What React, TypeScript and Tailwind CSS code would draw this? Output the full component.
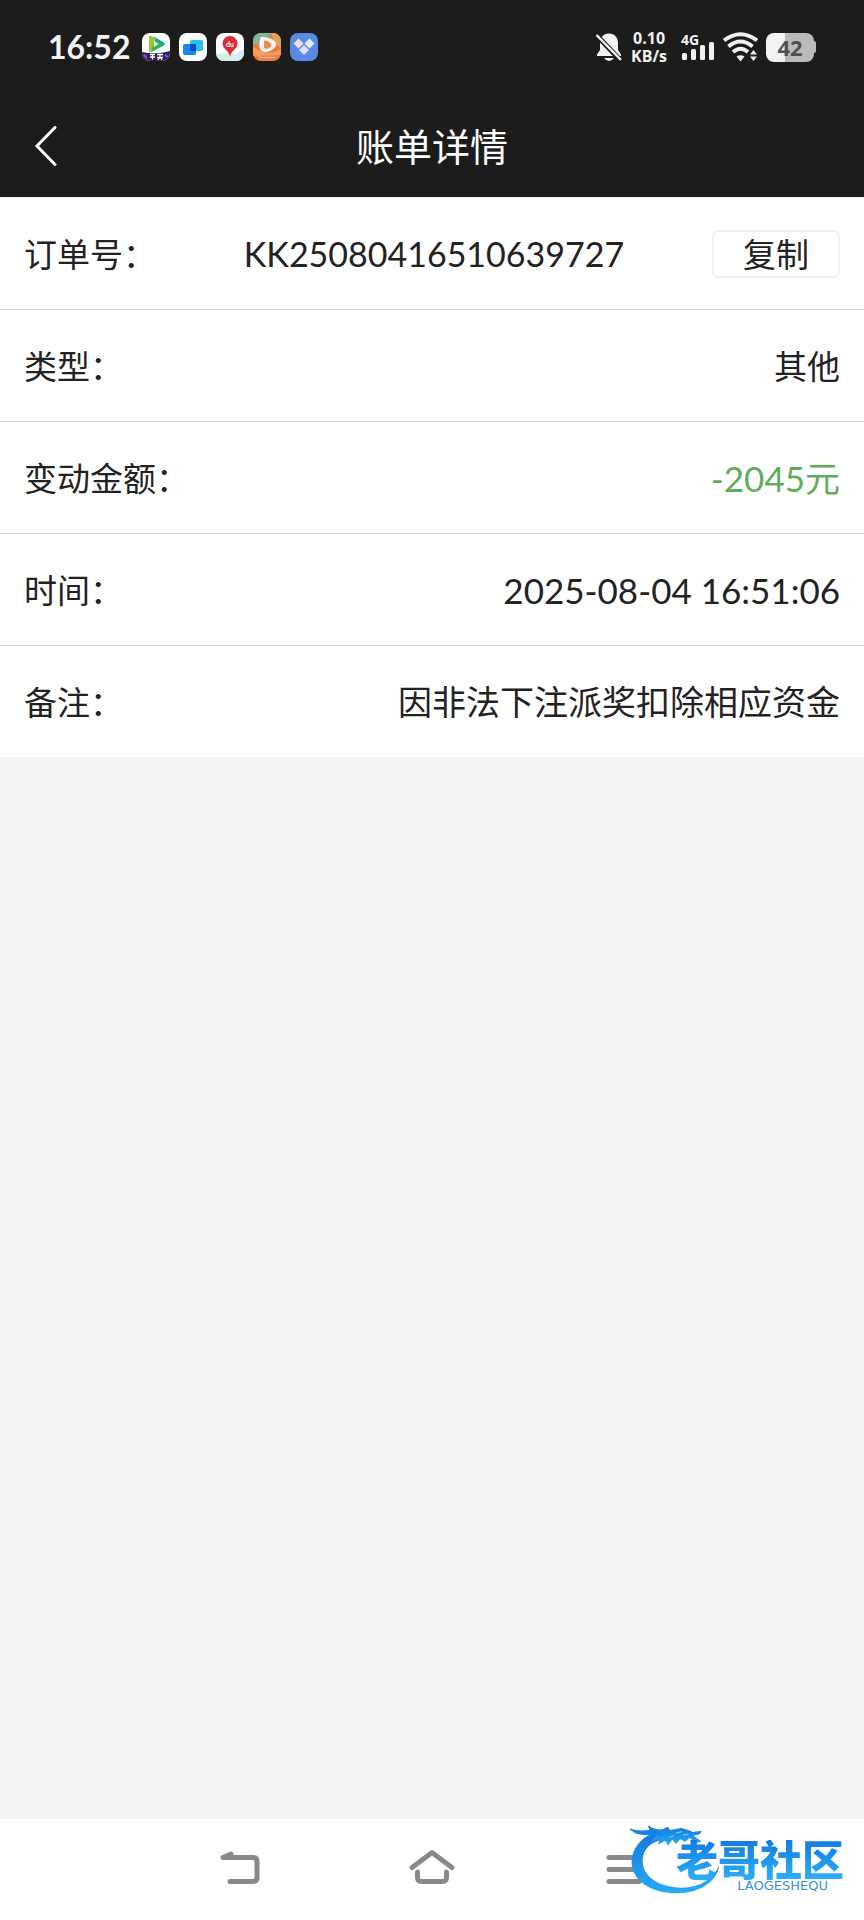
import type { ReactNode } from 'react';

interface BillRow {
  label: string;
  value: string;
  valueClass?: string;
  copyable?: boolean;
}

const rows: BillRow[] = [
  { label: '订单号：', value: 'KK25080416510639727', valueClass: 'text-[34px]', copyable: true },
  { label: '类型：', value: '其他' },
  { label: '变动金额：', value: '-2045元', valueClass: 'text-[35px] text-[#5fad5c]' },
  { label: '时间：', value: '2025-08-04 16:51:06', valueClass: 'text-[35px]' },
  { label: '备注：', value: '因非法下注派奖扣除相应资金', valueClass: 'text-[34px]' },
];

function AppIcon({ children }: { children: ReactNode }) {
  return (
    <svg viewBox="0 0 28 28" className="size-7 overflow-hidden rounded-lg" aria-hidden="true">
      {children}
    </svg>
  );
}

function NotificationIcons() {
  return (
    <div className="flex items-center gap-[9px]">
      <AppIcon>
        <rect width="28" height="28" fill="#fff" />
        <path d="M7 4.500Q7 2 9.500 3.200L21.500 9.500Q24 11 21.500 12.800L10 18.500Q7 19.500 7 16.500Z" fill="#1db954" />
        <path d="M7 5Q7 2 9.500 3.200L14 5.500L9 18.800Q7 19 7 16.500Z" fill="#9bc832" />
        <path d="M12 3.500L21.500 9.500Q23 10.500 22 12L14 6.500Z" fill="#1597c9" />
        <path d="M12 8L16.500 11L12 14Z" fill="#fff" />
        <path d="M0 19Q14 22 28 18V28H0Z" fill="#35205f" />
        <path d="M2 22l3 3M23 22l3 2" stroke="#9155d8" strokeWidth="2" />
        <path d="M8 21.500h5M8 24h5M10.500 21v5.500M15 21.500h6M15 24.500h6M18 20.500v3M16 27l2-3 2 3" stroke="#fff" strokeWidth="1.300" fill="none" />
      </AppIcon>
      <AppIcon>
        <rect width="28" height="28" fill="#fff" />
        <rect x="11" y="7" width="13" height="11" rx="2" fill="#27c3ee" />
        <rect x="4" y="11" width="13" height="11" rx="2" fill="#1789f2" />
        <rect x="11" y="11" width="6" height="7" fill="#0b51b8" />
      </AppIcon>
      <AppIcon>
        <rect width="28" height="28" fill="#fff" />
        <path d="M0 28V22L12 19L28 26V28Z" fill="#d4f0dc" />
        <path d="M15 23L28 16V28H20Z" fill="#d3ebfa" />
        <path d="M14 24Q13 19 9.500 16.500A7.500 7.500 0 1 1 18.500 16.500Q15 19 14 24Z" fill="#df2b35" />
        <text x="14" y="13.500" textAnchor="middle" fontSize="7" fontWeight="700" fontFamily="Lato, sans-serif" fill="#fff">du</text>
      </AppIcon>
      <AppIcon>
        <rect width="28" height="28" fill="#ee7c3f" />
        <path d="M0 0H20L14 5Q4 12 0 12Z" fill="#86b59a" />
        <path d="M18 0H28V15L21 9Z" fill="#dba160" />
        <path d="M0 13Q7 20 20 20L28 16V22L0 23Z" fill="#f59a61" />
        <path d="M7 6Q7 3 11 4Q20 5 23 10Q24 13 20 16Q14 21 9 18Q5 16 7 6Z" fill="#fff7ee" />
        <path d="M11 8.500Q11 7 13 7.500Q18 9 18.500 12Q18 15 13 16Q11 16 11 14Z" fill="#df8c56" />
        <path d="M6 24.500h16" stroke="#f9b58a" strokeWidth="1.500" />
      </AppIcon>
      <AppIcon>
        <rect width="28" height="28" fill="#578ae3" />
        <path d="M8.500 5.500L13.500 10.500L8.500 15.500L3.500 10.500Z" fill="#f0dce9" />
        <path d="M19.500 5.500L24.500 10.500L19.500 15.500L14.500 10.500Z" fill="#dcebfa" />
        <path d="M14 12L19 17L14 22L9 17Z" fill="#e4ddf7" />
      </AppIcon>
    </div>
  );
}

function StatusBar() {
  return (
    <div className="flex h-[98px] items-center justify-between px-12 pb-1 text-[#f2f2f2]">
      <div className="flex items-center gap-3">
        <span className="text-[32px] leading-9 font-bold">16:52</span>
        <NotificationIcons />
      </div>

      <div className="flex items-center gap-2">
        <svg viewBox="0 0 28 30" className="h-[30px] w-7" aria-label="静音">
          <path d="M14 1.500C8 1.500 5 6 5 11V18L2 22.500V24H26V22.500L23 18V11C23 6 20 1.500 14 1.500Z" fill="currentColor" />
          <path d="M9 26h10q-2 3-5 3t-5-3Z" fill="currentColor" />
          <path d="M0 1.500L26 29" stroke="#1c1c1c" strokeWidth="5" />
          <path d="M1.500 3L26 28" stroke="currentColor" strokeWidth="2.500" />
        </svg>
        <div className="mr-1.5 text-center font-['Open_Sans',sans-serif] text-base leading-[18px] font-bold">
          <div>0.10</div>
          <div>KB/s</div>
        </div>
        <div className="flex flex-col">
          <span className="font-['Open_Sans',sans-serif] text-sm leading-3 font-bold">4G</span>
          <svg viewBox="0 0 34 18" className="-mt-1 h-[18px] w-[34px]" aria-label="信号">
            <rect x="1" y="11" width="5" height="7" rx="1.500" fill="currentColor" />
            <rect x="10" y="7" width="5" height="11" rx="1.500" fill="currentColor" />
            <rect x="19" y="3" width="5" height="15" rx="1.500" fill="currentColor" />
            <rect x="28" y="0" width="5" height="18" rx="1.500" fill="currentColor" />
          </svg>
        </div>
        <svg viewBox="0 0 35 30" className="h-[30px] w-[35px]" aria-label="无线网络">
          <g fill="none" stroke="currentColor" strokeWidth="4">
            <path d="M1 8.500Q17.500-4 34 8.500" />
            <path d="M5.500 14.500Q17.500 4.500 29.500 14.500" />
            <path d="M10 20Q17.500 13.500 25 20" />
          </g>
          <path d="M13.500 24.500Q17.500 22 21.500 24.500L17.500 29.500Z" fill="currentColor" />
          <path d="M27 22.500L30.500 18L34 22.500ZM27 24.500L30.500 29L34 24.500Z" fill="currentColor" />
        </svg>
        <div className="flex items-center">
          <span className="flex h-[29px] w-12 items-center justify-center rounded-lg bg-linear-to-r from-[#f2f2f2] from-40% to-[#bababa] to-40% font-['Open_Sans',sans-serif] text-[22px] leading-6 font-bold text-[#505050]">
            42
          </span>
          <span className="h-3 w-0.5 rounded-r-sm bg-[#bababa]" />
        </div>
      </div>
    </div>
  );
}

function TitleBar() {
  return (
    <div className="grid h-[99px] grid-cols-[1fr_auto_1fr] items-center px-[34px] pb-[3px] text-white">
      <button type="button" aria-label="返回" className="w-fit">
        <svg viewBox="0 0 24 40" className="h-10 w-6" fill="none" stroke="currentColor" strokeWidth="3" strokeLinecap="round">
          <path d="M21 1.500L3 20L21 38.500" />
        </svg>
      </button>
      <h1 className="text-[38px] leading-[48px]">账单详情</h1>
    </div>
  );
}

function Watermark() {
  return (
    <div className="pointer-events-none absolute right-5 bottom-6 flex items-start">
      <svg viewBox="105 72 273 216" className="h-[72px] w-[91px]" aria-hidden="true">
        <defs>
          <linearGradient id="dragon" x1="0" y1="0" x2="0" y2="1">
            <stop offset="0" stopColor="#1279dc" />
            <stop offset="1" stopColor="#27aaf8" />
          </linearGradient>
        </defs>
        <g fill="url(#dragon)">
          <path d="M205 92C150 100 113 140 113 188C113 240 170 280 250 280C315 280 370 245 376 196C358 235 318 264 262 263C195 262 146 230 146 184C146 150 168 124 214 118Z" />
          <path d="M106 87Q135 94 166 90L163 77Q185 90 205 88L222 80L228 90L262 84Q286 90 296 96L323 92L318 103L298 107L322 124L312 129L286 114L274 125L258 118L246 132L235 119L222 137L214 122L192 134L196 118L172 124L188 104Q150 108 126 101Z" />
          <path d="M164 78Q178 100 205 104M108 88Q150 106 186 98" fill="none" stroke="#167fdf" strokeWidth="5" />
        </g>
        <path d="M246 99l18-4M266 105l18-2M226 112l14-5" stroke="#8ed0ff" strokeWidth="3" />
      </svg>
      <div className="-ml-11 flex flex-col items-end pt-4">
        <span className="bg-linear-to-b from-[#167be0] to-[#2bb0fa] bg-clip-text text-[42px] leading-10 font-black text-transparent">
          老哥社区
        </span>
        <span className="mr-4 font-['DejaVu_Sans',sans-serif] text-[13px] leading-3 text-[#3b91da]">LAOGESHEQU</span>
      </div>
    </div>
  );
}

function NavBar() {
  return (
    <nav className="relative flex h-[101px] items-center justify-center gap-36 bg-white pb-1.5 text-[#898989]">
      <button type="button" aria-label="返回">
        <svg viewBox="0 0 48 48" className="size-12" fill="none" stroke="currentColor" strokeWidth="5" strokeLinecap="round" strokeLinejoin="round">
          <path d="M15 11L7 14.500H37Q41 14.500 41 18.500V34.500Q41 38.500 37 38.500H14" />
          <path d="M7 14.500L15 10.500V14.500Z" fill="currentColor" strokeWidth="3" />
        </svg>
      </button>
      <button type="button" aria-label="主页">
        <svg viewBox="0 0 48 48" className="size-12" fill="none" stroke="currentColor" strokeWidth="5" strokeLinecap="round" strokeLinejoin="round">
          <path d="M4 24.500L24 9.500L44 24.500" />
          <path d="M9.500 29V34.500Q9.500 38.500 13.500 38.500H34.500Q38.500 38.500 38.500 34.500V29" />
        </svg>
      </button>
      <button type="button" aria-label="最近任务">
        <svg viewBox="0 0 48 48" className="size-12" fill="none" stroke="currentColor" strokeWidth="5" strokeLinecap="round">
          <path d="M9 14.500H39M9 26.500H39M9 38.500H39" />
        </svg>
      </button>
      <Watermark />
    </nav>
  );
}

export default function App() {
  return (
    <div className="flex min-h-screen flex-col bg-[#f3f3f3] font-[Lato,'Noto_Sans_CJK_SC',sans-serif]">
      <header className="bg-[#1c1c1c]">
        <StatusBar />
        <TitleBar />
      </header>

      <main className="flex-1">
        <dl className="divide-y divide-[#cfcfcf] border-t border-[#eeeeee] bg-white text-[33px] leading-[48px] text-[#222222]">
          {rows.map((row) => (
            <div key={row.label} className="flex items-center justify-between px-6 pt-8 pb-[31px]">
              <dt>{row.label}</dt>
              <dd className={row.valueClass}>{row.value}</dd>
              {row.copyable && (
                <dd>
                  <button type="button" className="block h-12 w-32 rounded-md border-2 border-[#f2f2f2] leading-[44px]">
                    复制
                  </button>
                </dd>
              )}
            </div>
          ))}
        </dl>
      </main>

      <NavBar />
    </div>
  );
}
